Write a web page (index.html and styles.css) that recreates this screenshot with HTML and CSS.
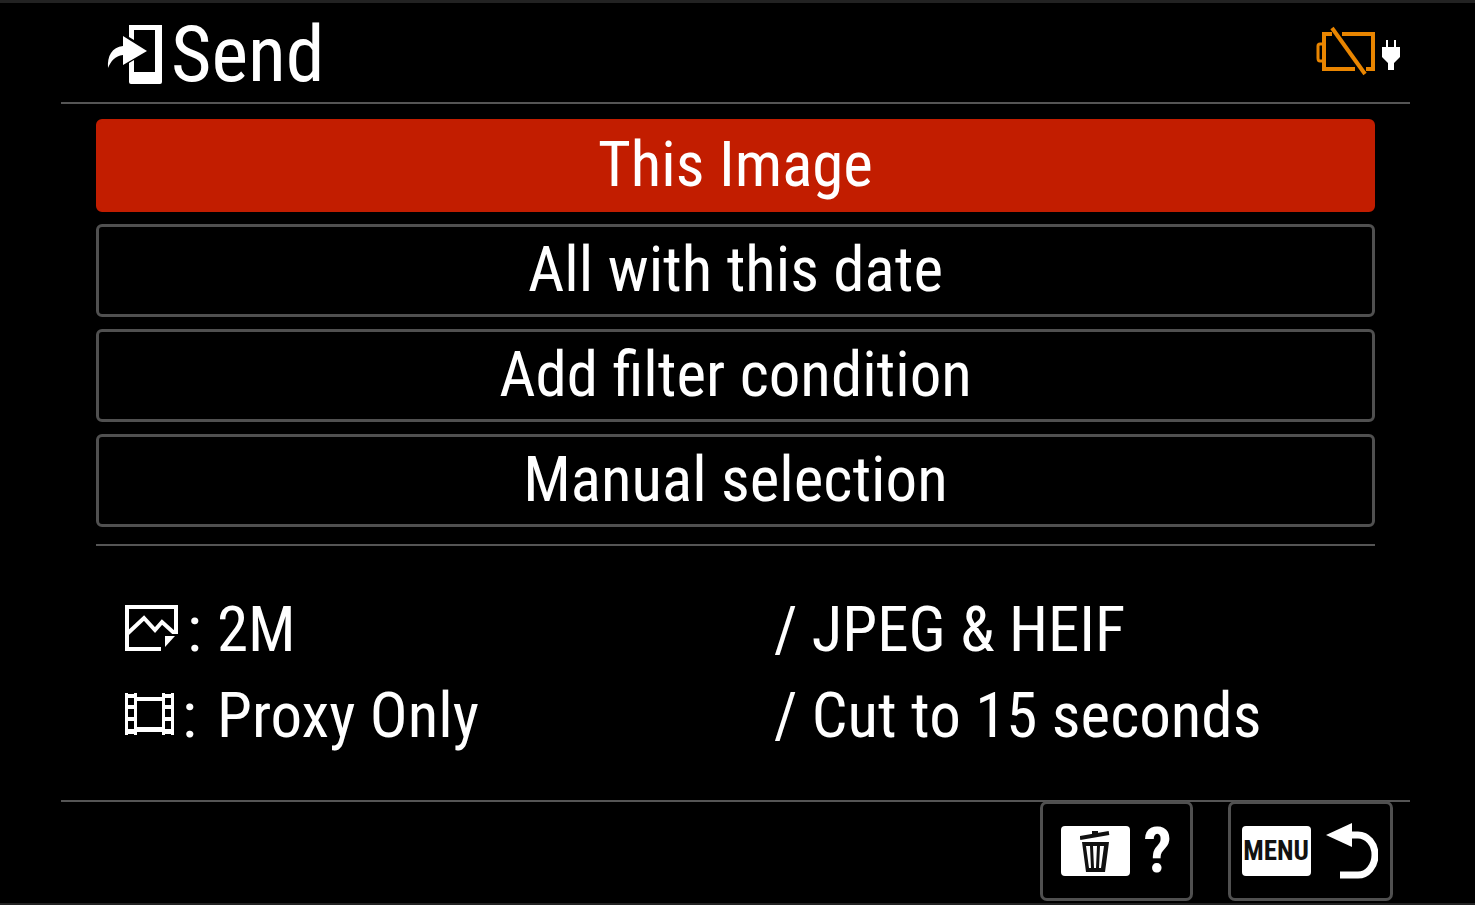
FILE: index.html
```html
<!DOCTYPE html>
<html lang="en">
<head>
<meta charset="utf-8">
<meta name="viewport" content="width=device-width, initial-scale=1">
<title>Send</title>
<link rel="stylesheet" href="styles.css">
</head>
<body class="screen">
<header class="header">
  <svg class="send-icon" viewBox="0 0 56 60" aria-hidden="true">
    <path fill="#fff" fill-rule="evenodd" d="M22 0h33v57q0 2-2 2H24q-2 0-2-2V38l5-3v12h21V5H27v10l-5-3z"/>
    <path fill="#fff" d="M16 11l24 15-24 14V30C8 31 4 36 1 43c-1-12 4-21 15-22z"/>
  </svg>
  <h1 class="title">Send</h1>
  <div class="status">
    <svg class="battery-icon" viewBox="0 0 62 52" role="img" aria-label="No battery">
      <g fill="none" stroke="#e98500" stroke-width="4">
        <path d="M17 9H9v35h31M27 9h31v35h-7"/>
        <path d="M8 19H5q-2 0-2 2v12q0 3 2 3h3" stroke-width="3"/>
        <path d="M17 3l33 46"/>
      </g>
    </svg>
    <svg class="plug-icon" viewBox="0 0 18 30" role="img" aria-label="Plugged in">
      <path fill="#fff" d="M4 0h2v7h6V0h2v7h4v10l-6 6v7H6v-7l-6-6V7h4z"/>
    </svg>
  </div>
</header>
<main class="main">
  <div class="options">
    <button class="option option-selected" type="button">This Image</button>
    <button class="option" type="button">All with this date</button>
    <button class="option" type="button">Add filter condition</button>
    <button class="option" type="button">Manual selection</button>
  </div>
  <div class="settings">
    <div class="setting">
      <span class="setting-type">
        <svg class="photo-icon" viewBox="0 0 54 48" role="img" aria-label="Still images">
          <path fill="none" stroke="#fff" stroke-width="4" d="M36 45H2V3h49v25M2 30l17-16 11 12 7-8 11 10h5"/>
          <path fill="#fff" d="M40 32h10L40 43z"/>
        </svg>
        <span>:</span>
      </span>
      <span>2M</span>
      <span>/ JPEG &amp; HEIF</span>
    </div>
    <div class="setting">
      <span class="setting-type">
        <svg class="film-icon" viewBox="0 0 49 44" role="img" aria-label="Movies">
          <path fill="#fff" fill-rule="evenodd" d="M0 1h3v1h6V1h3v4h25V1h3v1h6V1h3v42h-3v-1h-6v1h-3v-3H12v3H9v-1H3v1H0zM3 6v7h6V6zM3 17v8h6v-8zM3 29v8h6v-8zM12 9v26h25V9zM40 6v7h6V6zM40 17v8h6v-8zM40 29v8h6v-8z"/>
        </svg>
        <span>:</span>
      </span>
      <span>Proxy Only</span>
      <span>/ Cut to 15 seconds</span>
    </div>
  </div>
</main>
<footer class="footer">
  <button class="key" type="button" aria-label="Help">
    <span class="keycap">
      <svg class="trash-icon" viewBox="0 0 32 42" aria-hidden="true">
        <path fill="none" stroke="#111" stroke-width="4" d="M0 8l29-5M12 3h6"/>
        <path fill="#111" fill-rule="evenodd" d="M2 12h27l-4 30H6zM6 16l3 22h2L10 16zM13 16l1 22h2l1-22zM20 16l-1 22h2l3-22z"/>
      </svg>
    </span>
    <span class="help-mark">?</span>
  </button>
  <button class="key key-menu" type="button" aria-label="Back">
    <span class="keycap">MENU</span>
    <svg class="back-icon" viewBox="0 0 52 56" aria-hidden="true">
      <path fill="#fff" d="M0 12L26 0v24z"/>
      <path fill="none" stroke="#fff" stroke-width="7" d="M24 12h8a17 20 0 0 1 0 40H14"/>
    </svg>
  </button>
</footer>
</body>
</html>
```
FILE: styles.css
```css
* {
  box-sizing: border-box;
}

.screen {
  display: flex;
  flex-direction: column;
  min-height: 100vh;
  margin: 0;
  border-top: 3px solid #222;
  border-bottom: 2px solid #222;
  background: #000;
  color: #fff;
  font-family: "Roboto Condensed", "Roboto", sans-serif;
  font-size: 63px;
  line-height: 86px;
}

.header {
  display: flex;
  align-items: center;
  height: 101px;
  margin: 0 65px 0 61px;
  padding: 0 10px 0 46px;
  border-bottom: 2px solid #555;
}

.send-icon {
  width: 56px;
  height: 60px;
  margin-top: 4px;
}

.title {
  margin: 4px 0 0 8px;
  font-size: 78px;
  line-height: 96px;
  font-weight: 400;
}

.status {
  display: flex;
  align-items: center;
  gap: 5px;
  margin: 0 0 4px auto;
}

.battery-icon {
  width: 62px;
  height: 52px;
}

.plug-icon {
  width: 18px;
  height: 30px;
  margin-top: 8px;
}

.main {
  flex: 1;
  margin: 0 100px 0 96px;
  padding-top: 15px;
}

.options {
  display: flex;
  flex-direction: column;
  gap: 12px;
  padding-bottom: 17px;
  border-bottom: 2px solid #555;
}

.option {
  width: 100%;
  height: 93px;
  padding: 0 0 2px;
  border: 3px solid #505050;
  border-radius: 6px;
  background: #000;
  color: inherit;
  font: inherit;
}

.option-selected {
  border-color: #c21d00;
  background: #c21d00;
}

.settings {
  padding: 41px 0 0 29px;
}

.setting {
  display: grid;
  grid-template-columns: 92px 557px 1fr;
  white-space: nowrap;
}

.setting-type {
  display: flex;
  align-items: center;
  gap: 8px;
}

.photo-icon {
  width: 54px;
  height: 48px;
  margin-bottom: 4px;
}

.film-icon {
  width: 49px;
  height: 44px;
  margin-bottom: 4px;
}

.footer {
  display: flex;
  justify-content: flex-end;
  gap: 35px;
  margin: 0 65px 0 61px;
  padding: 0 17px 2px 0;
  border-top: 2px solid #555;
}

.key {
  display: flex;
  align-items: center;
  justify-content: center;
  gap: 13px;
  width: 153px;
  height: 100px;
  margin-top: -1px;
  padding: 0;
  border: 3px solid #505050;
  border-radius: 7px;
  background: #000;
  color: inherit;
  font: inherit;
}

.key-menu {
  gap: 15px;
  width: 165px;
  padding-right: 2px;
}

.keycap {
  display: flex;
  align-items: center;
  justify-content: center;
  width: 69px;
  height: 50px;
  border-radius: 4px;
  background: #fff;
  color: #111;
  font-size: 27px;
  line-height: 50px;
  font-weight: 700;
}

.trash-icon {
  width: 32px;
  height: 42px;
}

.help-mark {
  font-size: 63px;
  font-weight: 700;
}

.back-icon {
  width: 52px;
  height: 56px;
}
```
